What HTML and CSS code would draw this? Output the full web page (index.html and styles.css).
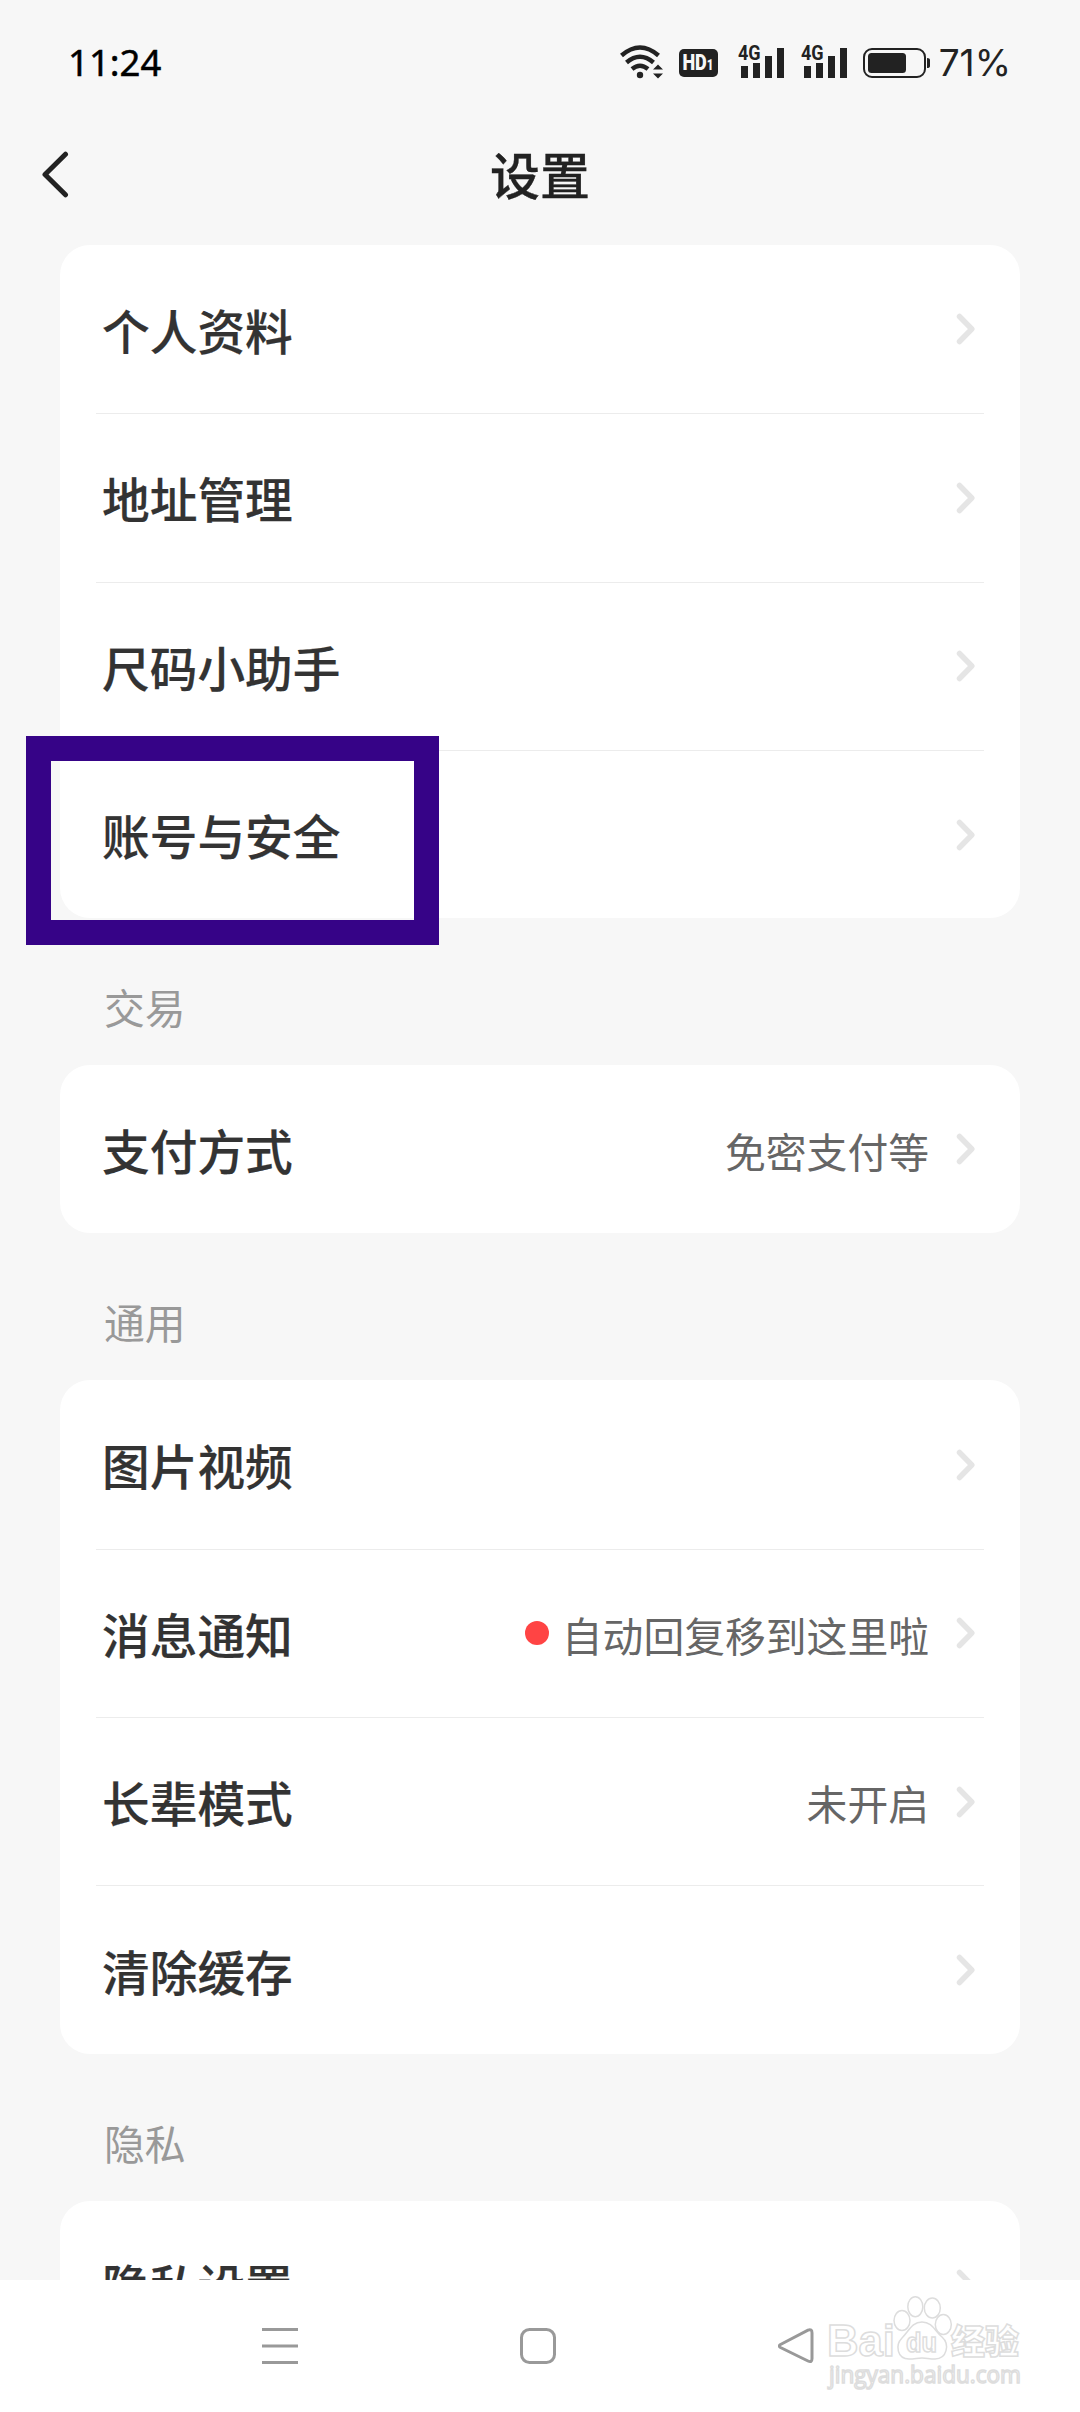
FILE: index.html
```html
<!DOCTYPE html>
<html lang="zh-CN">
<head>
<meta charset="utf-8">
<title>设置</title>
<link rel="stylesheet" href="styles.css">
</head>
<body>
<svg class="defs" aria-hidden="true">
  <symbol id="chevron" viewBox="0 0 20 32"><path d="M3.5 3.5 15.8 16 3.5 28.500"/></symbol>
</svg>
<div class="screen">
  <header class="status">
    <span class="time">11:24</span>
    <div class="indicators">
      <svg class="wifi" viewBox="0 0 44 34">
        <g fill="none" stroke="#222" stroke-width="4.500"><path d="M1.500 10.500Q20 -5.500 38.500 10.500"/><path d="M6.500 17.500Q20 6 33.500 17.500"/><path d="M12 24Q20 17.500 28 24"/></g>
        <circle cx="20" cy="30" r="3.200" fill="#222"/>
        <path d="M33 24.500h10l-5-5zM33 28.500h10l-5 5z" fill="#222"/>
      </svg>
      <span class="hd"><b>HD<small>1</small></b></span>
      <span class="signal"><svg viewBox="0 0 46 33"><path d="M3 21h7v12H3zM15 18h7v15h-7zM27 11h7v22h-7zM39 3h7v30h-7z"/></svg><b>4G</b></span>
      <span class="signal"><svg viewBox="0 0 46 33"><path d="M3 21h7v12H3zM15 18h7v15h-7zM27 11h7v22h-7zM39 3h7v30h-7z"/></svg><b>4G</b></span>
      <svg class="battery" viewBox="0 0 67 30"><rect x="1" y="1" width="61" height="28" rx="8" fill="none" stroke="#222" stroke-width="2"/><rect x="5" y="5" width="38" height="20" rx="3.500" fill="#222"/><path d="M64 10q3 0 3 2v6q0 2-3 2z" fill="#222"/></svg>
      <span class="percent">71%</span>
    </div>
  </header>
  <nav class="titlebar">
    <svg class="back" viewBox="0 0 28 47"><path d="M24.500 3.200 4 23.500 24.500 43.800"/></svg>
    <h1>设置</h1>
  </nav>
  <main>
    <section class="card">
      <div class="row"><span class="label">个人资料</span><svg class="chevron"><use href="#chevron"/></svg></div>
      <div class="row"><span class="label">地址管理</span><svg class="chevron"><use href="#chevron"/></svg></div>
      <div class="row"><span class="label">尺码小助手</span><svg class="chevron"><use href="#chevron"/></svg></div>
      <div class="row"><span class="label">账号与安全</span><svg class="chevron"><use href="#chevron"/></svg><div class="highlight"></div></div>
    </section>
    <h2>交易</h2>
    <section class="card">
      <div class="row"><span class="label">支付方式</span><span class="value">免密支付等</span><svg class="chevron"><use href="#chevron"/></svg></div>
    </section>
    <h2>通用</h2>
    <section class="card">
      <div class="row"><span class="label">图片视频</span><svg class="chevron"><use href="#chevron"/></svg></div>
      <div class="row"><span class="label">消息通知</span><i class="dot"></i><span class="value">自动回复移到这里啦</span><svg class="chevron"><use href="#chevron"/></svg></div>
      <div class="row"><span class="label">长辈模式</span><span class="value">未开启</span><svg class="chevron"><use href="#chevron"/></svg></div>
      <div class="row"><span class="label">清除缓存</span><svg class="chevron"><use href="#chevron"/></svg></div>
    </section>
    <h2>隐私</h2>
    <section class="card">
      <div class="row"><span class="label">隐私设置</span><svg class="chevron"><use href="#chevron"/></svg></div>
    </section>
  </main>
  <footer class="navbar">
    <svg viewBox="0 0 36 36"><path d="M0 1.500h36M0 18h36M0 34.500h36"/></svg>
    <svg viewBox="0 0 36 36"><rect x="1.500" y="1.500" width="33" height="33" rx="8"/></svg>
    <svg viewBox="0 0 36 36"><path d="M2.500 16.500 30 2.200Q34 .5 34 5V30.500Q34 35 30 33L2.500 19.500Q0 18 2.500 16.500Z"/></svg>
    <svg class="watermark" viewBox="0 0 200 100">
      <text class="brand" x="2" y="63" textLength="68" lengthAdjust="spacingAndGlyphs">Bai</text>
      <g><ellipse cx="77" cy="27.500" rx="8" ry="10"/><ellipse cx="90.300" cy="13.700" rx="7.500" ry="10"/><ellipse cx="107.300" cy="15" rx="8" ry="10"/><ellipse cx="118.300" cy="31.500" rx="8" ry="10"/><path d="M97 29C107 29 110 38 117 44C125 51 122 66 110 66C104 66 102 65 97 65C92 65 90 66 84 66C72 66 70 52 77 45C84 38 87 29 97 29Z"/></g>
      <text class="du" x="81" y="59" textLength="31" lengthAdjust="spacingAndGlyphs">du</text>
      <text class="cn" x="126" y="61" textLength="68">经验</text>
      <text class="url" x="4" y="90" textLength="192" lengthAdjust="spacingAndGlyphs">jingyan.baidu.com</text>
    </svg>
  </footer>
</div>
</body>
</html>
```
FILE: styles.css
```css
* { box-sizing: border-box; }
body { margin: 0; background: #f7f7f7; color: #333; font-family: "Noto Sans CJK SC", "Noto Sans", sans-serif; }
svg { display: block; flex: none; }
.defs { display: none; }
.screen { width: 1080px; height: 2412px; display: flex; flex-direction: column; overflow: hidden; }
.status { height: 123px; flex: none; display: flex; justify-content: space-between; align-items: center; padding: 0 69px 0 68px; color: #222; }
.time { font: 400 36.500px/50px "Noto Sans", sans-serif; color: #000; -webkit-text-stroke: .5px #000; }
.indicators { display: flex; align-items: center; }
.wifi { width: 44px; height: 34px; }
.hd { display: flex; justify-content: center; width: 39px; height: 28px; margin: 3px 3px 0 15px; border-radius: 5px; background: #222; color: #f7f7f7; font: 700 22px/28px "Roboto", sans-serif; }
.hd b { transform: scaleX(.82); }
.hd small { font-size: 14px; }
.signal { position: relative; width: 46px; height: 33px; margin-left: 17px; }
.signal svg { width: 46px; height: 33px; fill: #222; }
.signal b { position: absolute; left: 0; top: 0; font: 700 20.500px/17px "Roboto", sans-serif; background: #f7f7f7; transform: scaleX(.88); transform-origin: left; }
.battery { width: 67px; height: 30px; margin: 2px 0 0 16px; }
.percent { font: 400 37px/50px "Inter", sans-serif; margin: 2px 0 0 9px; }
.titlebar { height: 122px; flex: none; display: grid; grid-template-columns: 1fr auto 1fr; align-items: start; padding: 0 41px; }
.back { width: 28px; height: 47px; margin-top: 28px; fill: none; stroke: #222; stroke-width: 5; stroke-linecap: round; stroke-linejoin: round; }
h1 { grid-column: 2; margin: 13px 0 0; font-size: 50px; line-height: 74px; font-weight: 500; color: #222; -webkit-text-stroke: .3px #222; }
main { flex: 1; min-height: 0; overflow: hidden; padding: 0 60px; }
.card { background: #fff; border-radius: 30px; padding: 0 36px; }
.row { height: 168.300px; position: relative; display: flex; align-items: center; padding: 0 8px 0 6px; }
.row + .row { border-top: 1.500px solid #ececec; }
.label { font-size: 47.700px; line-height: 68px; font-weight: 500; margin-right: auto; padding-top: 1px; -webkit-text-stroke: .2px #333; }
.value { font-size: 40.800px; line-height: 60px; color: #666; padding-top: 3px; }
.chevron { width: 20px; height: 32px; margin-left: 27px; fill: none; stroke: #e5e5e5; stroke-width: 5.500; stroke-linecap: round; stroke-linejoin: round; }
.dot { width: 24px; height: 24px; border-radius: 50%; background: #ff4444; margin-right: 13px; }
h2 { margin: 0; height: 147px; padding: 59px 0 0 44px; font-size: 40.800px; line-height: 60px; font-weight: 400; color: #999; }
.highlight { position: absolute; left: -70.500px; top: -15px; width: 413px; height: 209px; border: 25px solid #360387; }
.navbar { position: relative; height: 132px; flex: none; display: flex; gap: 222px; align-items: center; padding: 0 0 0 262px; background: #fff; }
.navbar svg { width: 36px; height: 36px; fill: none; stroke: #999; stroke-width: 3; }
.navbar .watermark { position: absolute; left: 825px; top: 13px; width: 200px; height: 100px; stroke: #ddd; stroke-width: 1.500; fill: #fff; overflow: visible; }
.brand, .du { font: 700 44px "Liberation Sans", sans-serif; }
.du { font-size: 27px; }
.cn { font: 900 34px "Noto Sans CJK SC", sans-serif; }
.url { font: 400 23px "Open Sans", sans-serif; }
```
